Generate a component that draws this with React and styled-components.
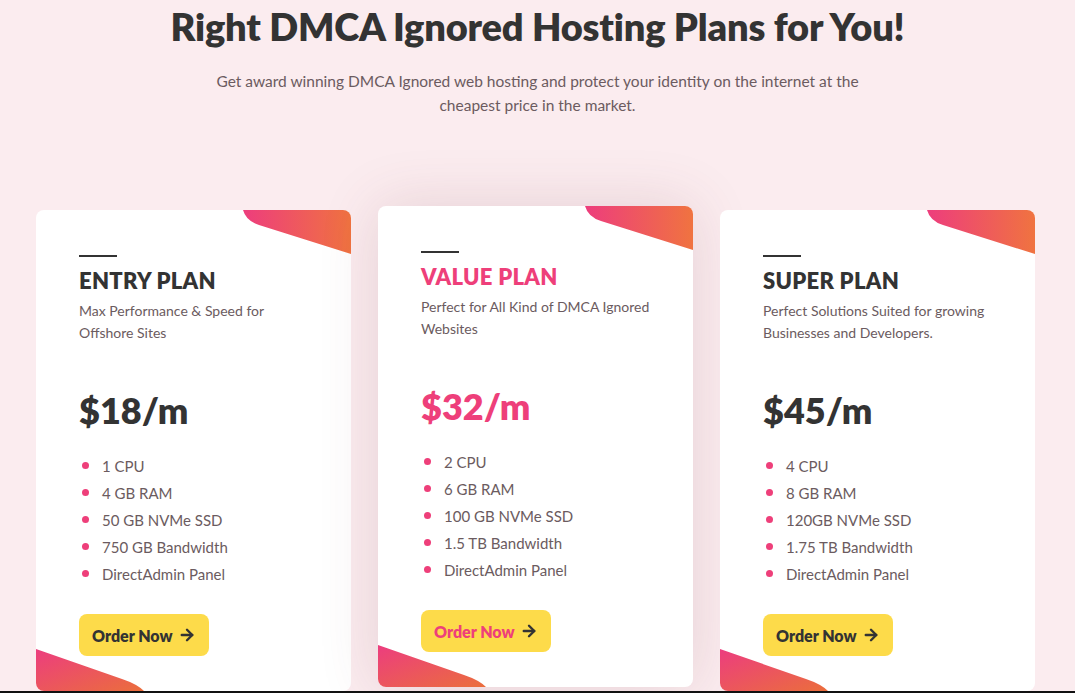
import styled, { createGlobalStyle } from "styled-components";
import { ArrowRight } from "lucide-react";

const plans = [
    {
        name: "Entry Plan",
        desc: "Max Performance & Speed for Offshore Sites",
        price: "$18/m",
        features: ["1 CPU", "4 GB RAM", "50 GB NVMe SSD", "750 GB Bandwidth", "DirectAdmin Panel"],
    },
    {
        name: "Value Plan",
        desc: "Perfect for All Kind of DMCA Ignored Websites",
        price: "$32/m",
        features: ["2 CPU", "6 GB RAM", "100 GB NVMe SSD", "1.5 TB Bandwidth", "DirectAdmin Panel"],
        featured: true,
    },
    {
        name: "Super Plan",
        desc: "Perfect Solutions Suited for growing Businesses and Developers.",
        price: "$45/m",
        features: ["4 CPU", "8 GB RAM", "120GB NVMe SSD", "1.75 TB Bandwidth", "DirectAdmin Panel"],
    },
];

function CornerTop({ id }) {
    return (
        <TopShape width="108" height="44" viewBox="0 0 108 44">
            <defs>
                <linearGradient id={id} x1="0" y1="0" x2="1" y2="0">
                    <stop offset="0" stopColor="#ed3d7d" />
                    <stop offset="1" stopColor="#f07340" />
                </linearGradient>
            </defs>
            <path d="M0 0 Q3 11 16 15 L108 44 L108 0 Z" fill={`url(#${id})`} />
        </TopShape>
    );
}

function CornerBottom({ id }) {
    return (
        <BottomShape width="110" height="42" viewBox="0 0 110 42">
            <defs>
                <linearGradient id={id} x1="0" y1="0" x2="1" y2="1">
                    <stop offset="0" stopColor="#ec3d7f" />
                    <stop offset="1" stopColor="#eb6e3c" />
                </linearGradient>
            </defs>
            <path d="M0 0 L86 30 Q101 35 108 42 L0 42 Z" fill={`url(#${id})`} />
        </BottomShape>
    );
}

export default function App() {
    return (
        <>
            <GlobalStyle />
            <Page>
                <Header>
                    <Title>Right DMCA Ignored Hosting Plans for You!</Title>
                    <Lead>
                        Get award winning DMCA Ignored web hosting and protect your identity on the internet at the cheapest price in the market.
                    </Lead>
                </Header>
                <Cards>
                    {plans.map((p, i) => (
                        <Card key={p.name} $featured={p.featured}>
                            <CornerTop id={`gt${i}`} />
                            <CornerBottom id={`gb${i}`} />
                            <Dash />
                            <PlanName $featured={p.featured}>{p.name}</PlanName>
                            <PlanDesc>{p.desc}</PlanDesc>
                            <Price $featured={p.featured}>{p.price}</Price>
                            <Features>
                                {p.features.map((f) => (
                                    <Feature key={f}>{f}</Feature>
                                ))}
                            </Features>
                            <OrderButton $featured={p.featured}>
                                Order Now <ArrowRight size={18} strokeWidth={3.2} color="#333" />
                            </OrderButton>
                        </Card>
                    ))}
                </Cards>
            </Page>
        </>
    );
}

const GlobalStyle = createGlobalStyle`
body {
    margin: 0;
    background: #fbecef;
    font-family: 'Lato', 'Noto Sans', sans-serif;
    overflow: hidden;
}
`

const Page = styled.div`
height: 693px;
overflow: hidden;
border-bottom: 2px solid #111;
box-sizing: border-box;
`

const Header = styled.div`
display: flex;
flex-direction: column;
align-items: center;
padding-top: 3px;
`

const Title = styled.h1`
margin: 0;
font-size: 38px;
line-height: 46px;
font-weight: 800;
color: #333333;
letter-spacing: -0.2px;
`

const Lead = styled.p`
margin: 20px 0 0;
width: 680px;
text-align: center;
font-size: 15.5px;
line-height: 24px;
color: #6b5b60;
`

const Cards = styled.div`
display: flex;
gap: 27px;
justify-content: center;
align-items: flex-start;
padding: 93px 0 0 0;
margin-left: -4px;
`

const Card = styled.div`
position: relative;
width: 315px;
height: 481px;
box-sizing: border-box;
padding: 45px 43px 0;
background: #ffffff;
border-radius: 8px;
overflow: hidden;
display: flex;
flex-direction: column;
align-items: flex-start;
margin-top: ${(p) => (p.$featured ? "-4px" : "0")};
box-shadow: ${(p) => (p.$featured ? "0 0 60px rgba(120, 60, 75, 0.16)" : "none")};
`

const TopShape = styled.svg`
position: absolute;
top: 0;
right: 0;
`

const BottomShape = styled.svg`
position: absolute;
bottom: 0;
left: 0;
`

const Dash = styled.div`
width: 38px;
height: 2px;
background: #333333;
`

const PlanName = styled.h2`
margin: 11px 0 0;
font-size: 22px;
line-height: 26px;
font-weight: 800;
text-transform: uppercase;
letter-spacing: 0.3px;
color: ${(p) => (p.$featured ? "#ee3f7a" : "#333333")};
`

const PlanDesc = styled.p`
margin: 6px 0 0;
font-size: 14px;
line-height: 22px;
color: #6b5b60;
max-width: 234px;
`

const Price = styled.div`
margin-top: 44px;
font-size: 36px;
line-height: 44px;
font-weight: 800;
color: ${(p) => (p.$featured ? "#ee3f7a" : "#333333")};
`

const Features = styled.ul`
list-style: none;
margin: 20px 0 0;
padding: 0;
`

const Feature = styled.li`
display: flex;
align-items: center;
gap: 13px;
height: 27px;
font-size: 15px;
color: #6b5b60;

&::before {
    content: "";
    width: 7px;
    height: 7px;
    margin-left: 3px;
    border-radius: 50%;
    background: #ee3f7a;
}
`

const OrderButton = styled.button`
margin-top: 27px;
display: flex;
align-items: center;
gap: 5px;
height: 42px;
padding: 0 13px;
border: none;
border-radius: 8px;
background: #fddb4a;
font-family: 'Lato', sans-serif;
font-size: 16px;
font-weight: 800;
color: ${(p) => (p.$featured ? "#ee3f7a" : "#333333")};
`
